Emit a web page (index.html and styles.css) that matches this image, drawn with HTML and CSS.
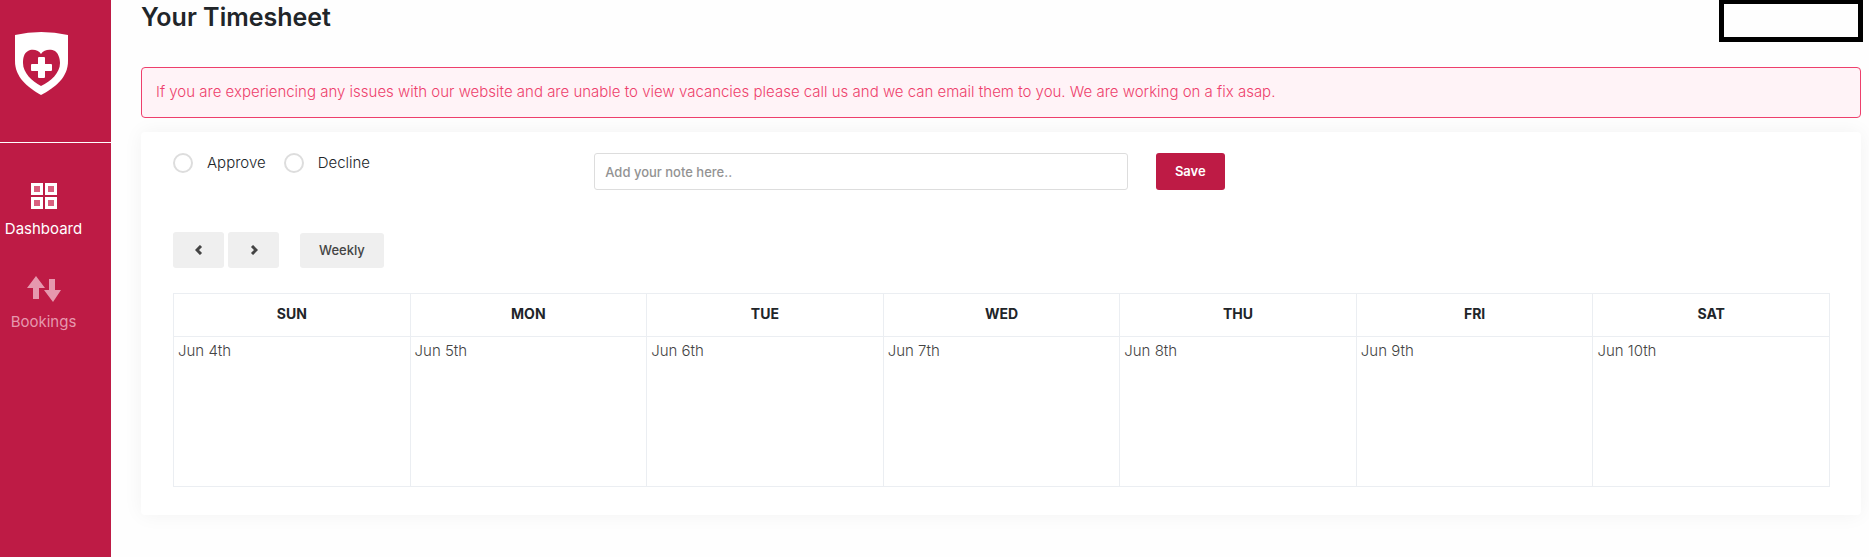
FILE: index.html
```html
<!DOCTYPE html>
<html lang="en">
<head>
    <meta charset="UTF-8">
    <meta name="viewport" content="width=device-width, initial-scale=1.0">
    <title>Your Timesheet</title>
    <link rel="stylesheet" href="styles.css">
</head>
<body>
    <aside class="sidebar">
        <div class="brand">
            <svg class="logo" width="54" height="63" viewBox="0 0 54 63" role="img" aria-label="Home">
                <path fill="#fff" d="M1 3Q27-3 54 3V29C54 45 42 55 27 63C13 55 1 45 1 29Z"/>
                <path fill="#be1b45" d="M27 22C24 17 17 17 14 19C10 21 9 26 9 31C9 41 18 49 27 54C37 49 46 41 46 31C46 26 44 21 41 19C37 17 30 17 27 22Z"/>
                <path fill="#fff" d="M25 25h5q1 0 1 1v6h6q1 0 1 1v5q0 1-1 1h-6v6q0 1-1 1h-5q-1 0-1-1v-6h-6q-1 0-1-1v-5q0-1 1-1h6v-6q0-1 1-1z"/>
            </svg>
        </div>
        <nav class="nav">
            <a class="nav-link active" href="#">
                <svg class="nav-icon" width="34" height="26" viewBox="0 0 34 26">
                    <path fill="#fff" d="M4 0h12v12H4zM18 0h12v12H18zM4 14h12v12H4zM18 14h12v12H18z"/>
                    <path fill="#d9607f" d="M7 3h6v6H7zM21 3h6v6h-6zM7 17h6v6H7zM21 17h6v6h-6z"/>
                </svg>
                Dashboard
            </a>
            <a class="nav-link" href="#">
                <svg class="nav-icon" width="34" height="26" viewBox="0 0 34 26">
                    <path fill="currentColor" d="M9 0l9 12h-6v11H6V12H0zM22 3h6v11h6l-8 12-9-12h5z"/>
                </svg>
                Bookings
            </a>
        </nav>
    </aside>

    <main class="content">
        <header class="page-header">
            <h1>Your Timesheet</h1>
            <div class="account"></div>
        </header>

        <div class="alert">If you are experiencing any issues with our website and are unable to view vacancies please call us and we can email them to you. We are working on a fix asap.</div>

        <section class="card">
            <form class="review">
                <div class="review-status">
                    <label class="radio"><input type="radio" name="status" value="approve">Approve</label>
                    <label class="radio"><input type="radio" name="status" value="decline">Decline</label>
                </div>
                <div class="review-note">
                    <input class="note" type="text" name="note" placeholder="Add your note here.." aria-label="Note">
                </div>
                <div class="review-save">
                    <button class="btn btn-save" type="button">Save</button>
                </div>
            </form>

            <div class="toolbar">
                <button class="btn btn-arrow" type="button" aria-label="Previous week">
                    <svg width="8" height="10" viewBox="0 0 8 10"><path d="M6 1L2 5l4 4"/></svg>
                </button>
                <button class="btn btn-arrow" type="button" aria-label="Next week">
                    <svg width="8" height="10" viewBox="0 0 8 10"><path d="M2 1l4 4-4 4"/></svg>
                </button>
                <button class="btn btn-view" type="button">Weekly</button>
            </div>

            <table class="calendar">
                <thead>
                    <tr>
                        <th>SUN</th>
                        <th>MON</th>
                        <th>TUE</th>
                        <th>WED</th>
                        <th>THU</th>
                        <th>FRI</th>
                        <th>SAT</th>
                    </tr>
                </thead>
                <tbody>
                    <tr>
                        <td>Jun 4th</td>
                        <td>Jun 5th</td>
                        <td>Jun 6th</td>
                        <td>Jun 7th</td>
                        <td>Jun 8th</td>
                        <td>Jun 9th</td>
                        <td>Jun 10th</td>
                    </tr>
                </tbody>
            </table>
        </section>
    </main>
</body>
</html>
```

FILE: styles.css
```css
* {
    box-sizing: border-box;
}
body {
    display: flex;
    min-height: 100vh;
    margin: 0;
    font-family: Inter, "Open Sans", sans-serif;
    font-size: 15px;
    line-height: 24px;
    color: #212529;
    background-color: #fefefe;
}

/* Sidebar */
.sidebar {
    flex: none;
    width: 111px;
    background-color: #be1b45;
}
.brand {
    height: 143px;
    padding: 32px 14px;
    border-bottom: 1px solid #fff;
}
.logo {
    display: block;
}
.nav {
    display: flex;
    flex-direction: column;
    gap: 35px;
    width: 87px;
    padding-top: 40px;
}
.nav-link {
    display: flex;
    flex-direction: column;
    align-items: center;
    gap: 8px;
    color: #e698ae;
    text-decoration: none;
}
.nav-link.active {
    color: #fff;
}

/* Page */
.content {
    flex: 1;
    min-width: 0;
    padding: 0 8px 42px 30px;
}
.page-header {
    display: flex;
    justify-content: space-between;
    height: 67px;
}
h1 {
    margin: 0;
    font-size: 25px;
    font-weight: 600;
    line-height: 34px;
}
.account {
    width: 144px;
    height: 42px;
    margin-right: -2px;
    border: 5px solid #000;
    border-top-width: 4px;
}
.alert {
    padding: 12px 14px 13px;
    border: 1px solid #ee3f6c;
    border-radius: 4px;
    font-weight: 300;
    color: #ee3f6c;
    background-color: #fff3f7;
}
.card {
    margin-top: 14px;
    padding: 21px 31px 28px 32px;
    border-radius: 4px;
    background-color: #fff;
    box-shadow: 0 0 20px rgba(0, 0, 0, 0.05);
}

/* Approve / decline form */
.review {
    display: flex;
    margin: 0 -14px 42px;
}
.review-status,
.review-note,
.review-save {
    padding: 0 14px;
}
.review-status {
    display: flex;
    align-items: flex-start;
    gap: 18px;
    width: 25%;
}
.review-note {
    width: 33.3333%;
}
.radio {
    display: flex;
    align-items: center;
    gap: 14px;
    font-weight: 300;
    line-height: 20px;
}
.radio input {
    appearance: none;
    width: 20px;
    height: 20px;
    margin: 0;
    border: 2px solid #ddd;
    border-radius: 50%;
    background-color: #fff;
}
.radio input:checked {
    border: 6px solid #be1b45;
}
.note {
    display: block;
    width: 100%;
    height: 37px;
    padding: 0 10px;
    border: 1px solid #ddd;
    border-radius: 3px;
    font-family: inherit;
    font-size: 13px;
    font-weight: 500;
}
.note::placeholder {
    color: #939393;
}
.btn {
    display: flex;
    align-items: center;
    justify-content: center;
    height: 36px;
    padding: 0 19px 1px;
    border: none;
    border-radius: 3px;
    font-family: inherit;
    font-size: 13px;
    font-weight: 500;
    color: #444;
    background-color: #efefef;
    cursor: pointer;
}
.btn-save {
    height: 37px;
    font-weight: 600;
    color: #fff;
    background-color: #be1b45;
}

/* Calendar */
.toolbar {
    display: flex;
    align-items: flex-end;
    gap: 4px;
    margin-bottom: 25px;
}
.btn-arrow {
    width: 51px;
}
.btn-arrow path {
    fill: none;
    stroke: #444;
    stroke-width: 3;
}
.btn-view {
    height: 35px;
    margin-left: 17px;
}
.calendar {
    width: 100%;
    border-collapse: collapse;
    table-layout: fixed;
}
.calendar th,
.calendar td {
    border: 1px solid #ebeef2;
}
.calendar th {
    height: 43px;
    padding: 0 0 2px;
    font-size: 14px;
    font-weight: 700;
}
.calendar td {
    height: 150px;
    padding: 2px 4px;
    font-weight: 300;
    color: #444;
    vertical-align: top;
}
```
